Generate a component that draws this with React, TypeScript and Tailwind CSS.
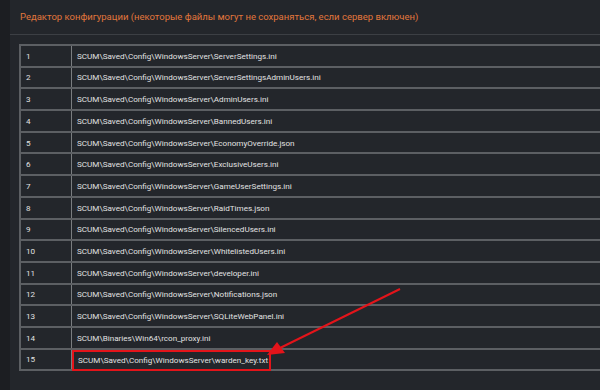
import React from "react";

const files = [
  "SCUM\\Saved\\Config\\WindowsServer\\ServerSettings.ini",
  "SCUM\\Saved\\Config\\WindowsServer\\ServerSettingsAdminUsers.ini",
  "SCUM\\Saved\\Config\\WindowsServer\\AdminUsers.ini",
  "SCUM\\Saved\\Config\\WindowsServer\\BannedUsers.ini",
  "SCUM\\Saved\\Config\\WindowsServer\\EconomyOverride.json",
  "SCUM\\Saved\\Config\\WindowsServer\\ExclusiveUsers.ini",
  "SCUM\\Saved\\Config\\WindowsServer\\GameUserSettings.ini",
  "SCUM\\Saved\\Config\\WindowsServer\\RaidTimes.json",
  "SCUM\\Saved\\Config\\WindowsServer\\SilencedUsers.ini",
  "SCUM\\Saved\\Config\\WindowsServer\\WhitelistedUsers.ini",
  "SCUM\\Saved\\Config\\WindowsServer\\developer.ini",
  "SCUM\\Saved\\Config\\WindowsServer\\Notifications.json",
  "SCUM\\Saved\\Config\\WindowsServer\\SQLiteWebPanel.ini",
  "SCUM\\Binaries\\Win64\\rcon_proxy.ini",
  "SCUM\\Saved\\Config\\WindowsServer\\warden_key.txt",
];

export default function App() {
  return (
    <div
      className="relative w-[600px] h-[390px] overflow-hidden bg-[#1c1e22] flex"
      style={{ fontFamily: "Roboto, 'Noto Sans', sans-serif" }}
    >
      <div className="ml-[10px] flex-1 bg-[#23262b] flex flex-col">
        <div className="h-[35px] flex items-center pl-[10px] text-[9.5px] text-[#e2763c] border-b border-[#3c3f44]">
          Редактор конфигурации (некоторые файлы могут не сохраняться, если сервер включен)
        </div>
        <div className="pt-[9px] pl-[9px]">
          <div className="w-[620px] border-t-2 border-l-2 border-[#5c5f63]">
            {files.map((f, i) => (
              <div
                key={i}
                className="flex h-[21.7px] border-b-2 border-[#5c5f63] text-[8.1px] text-[#e2e2e2]"
              >
                <div className="w-[51px] flex items-center pl-[5px] border-r border-[#7a7d80]">
                  {i + 1}
                </div>
                {i === 14 ? (
                  <div className="flex-1 flex items-center">
                    <span className="h-[21px] mt-[2px] flex items-center pl-[4px] pr-[1px] border-2 border-[#e3141a]">
                      {f}
                    </span>
                  </div>
                ) : (
                  <div className="flex-1 flex items-center pl-[5px]">{f}</div>
                )}
              </div>
            ))}
          </div>
        </div>
      </div>
      <svg
        className="absolute left-0 top-0 pointer-events-none"
        width="600"
        height="390"
        viewBox="0 0 600 390"
      >
        <line x1="400" y1="289" x2="280" y2="348" stroke="#e3141a" strokeWidth="2" />
        <polygon points="267,355 277,342 285,353" fill="#e3141a" />
      </svg>
    </div>
  );
}
